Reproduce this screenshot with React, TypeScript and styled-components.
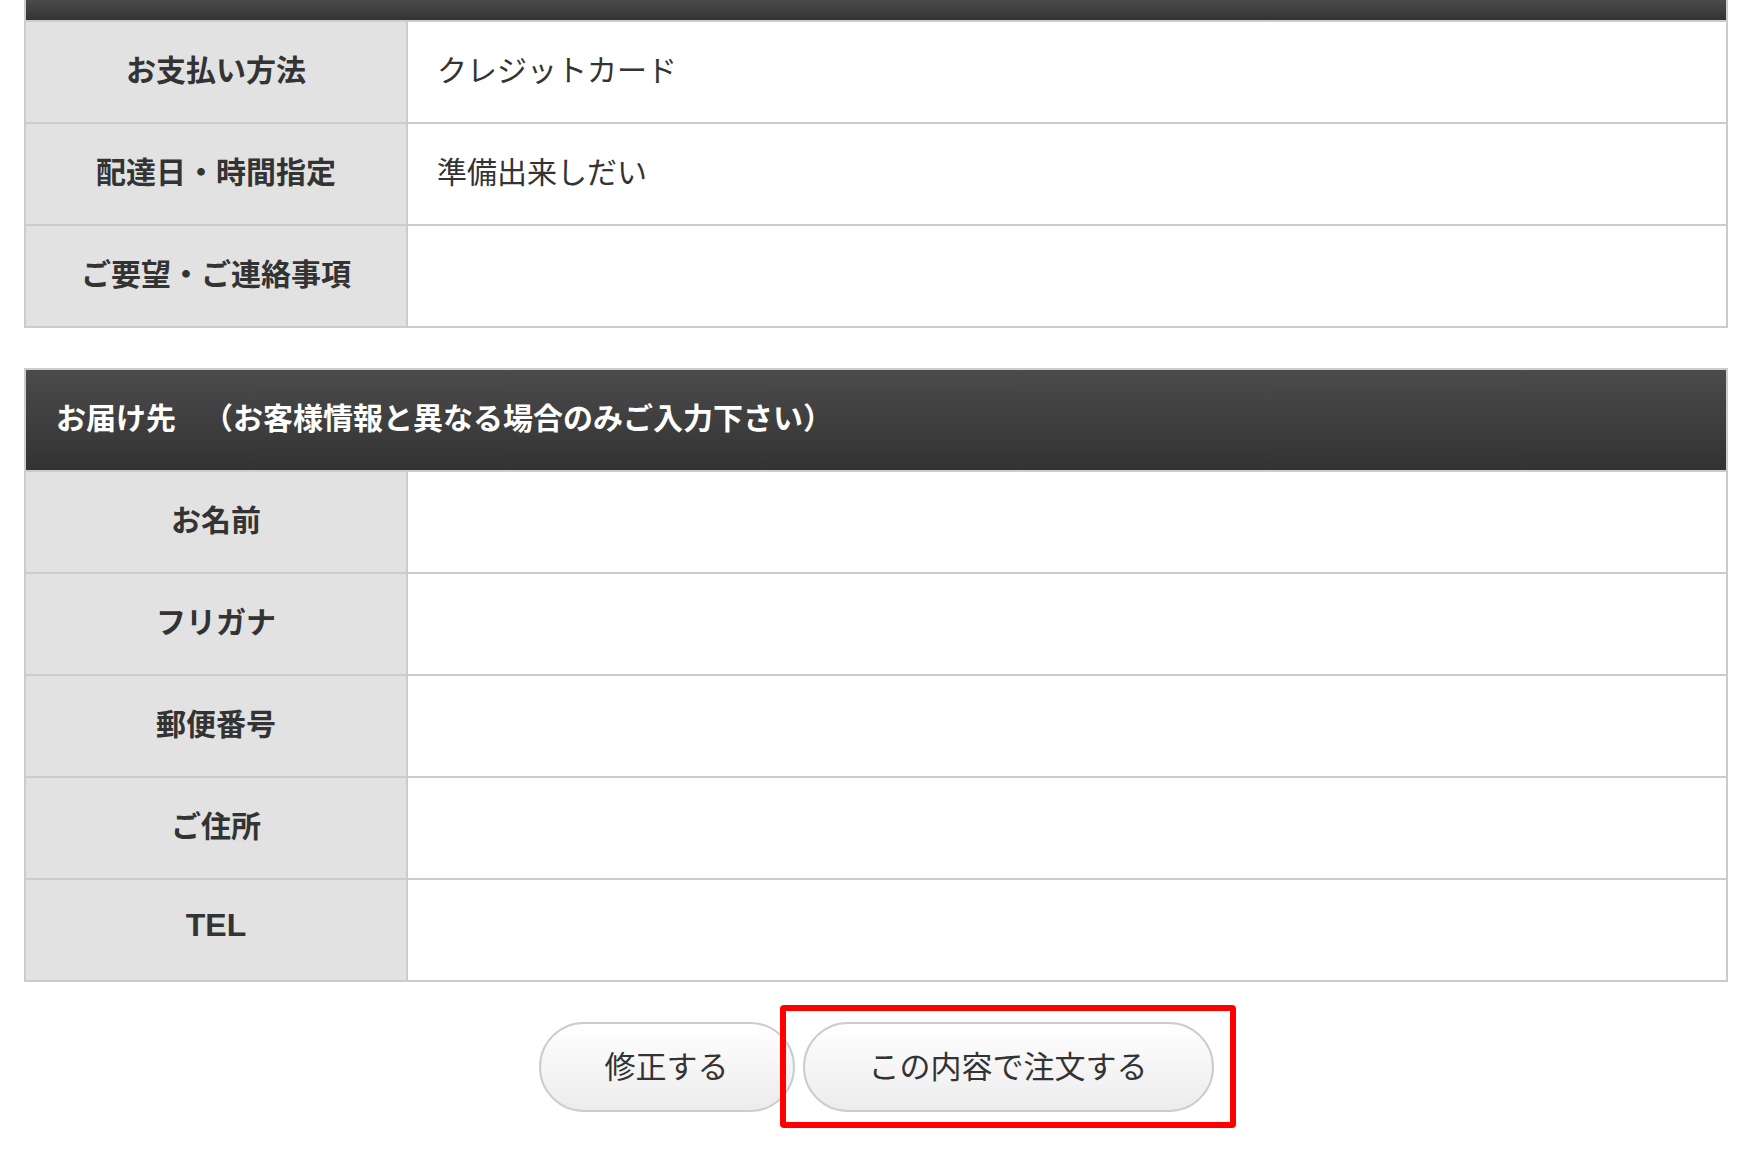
import React from "react";
import styled, { createGlobalStyle } from "styled-components";

const GlobalStyle = createGlobalStyle`
  html, body {
    margin: 0;
    padding: 0;
    background: #fff;
  }
  body {
    font-family: "Liberation Sans", "Noto Sans CJK JP", sans-serif;
    color: #333;
  }
`;

const Page = styled.div`
  width: 1704px;
  margin-left: 24px;
  padding-bottom: 40px;
`;

const Table = styled.table<{ $open?: boolean }>`
  width: 100%;
  table-layout: fixed;
  border-collapse: separate;
  border-spacing: 0;
  border-left: 2px solid #ccc;
  border-top: ${(p) => (p.$open ? "none" : "2px solid #ccc")};
  margin-bottom: 40px;
`;

const LabelCol = styled.col`
  width: 382px;
`;

const HeadCell = styled.th<{ $stub?: boolean }>`
  height: ${(p) => (p.$stub ? "20px" : "91px")};
  padding: 0 0 ${(p) => (p.$stub ? "0" : "9px")} 30px;
  background: linear-gradient(#4b4b4b, #333333);
  border-right: 2px solid #ccc;
  border-bottom: 2px solid #ccc;
  color: #fff;
  font-size: 30px;
  font-weight: 700;
  text-align: left;
  white-space: nowrap;
`;

const Note = styled.span`
  margin-left: 27px;
`;

const Label = styled.th<{ $latin?: boolean }>`
  height: 91px;
  padding: 0 0 9px;
  background: #e2e2e2;
  border-right: 2px solid #ccc;
  border-bottom: 2px solid #ccc;
  color: #333;
  font-size: ${(p) => (p.$latin ? "32px" : "30px")};
  font-weight: 700;
  text-align: center;
`;

const Value = styled.td`
  height: 91px;
  padding: 0 0 9px 29px;
  background: #fff;
  border-right: 2px solid #ccc;
  border-bottom: 2px solid #ccc;
  color: #333;
  font-size: 30px;
  font-weight: 400;
`;

const Actions = styled.div`
  display: flex;
  justify-content: center;
  align-items: center;
  gap: 8px;
`;

const Button = styled.button`
  height: 90px;
  padding: 0 64px 6px;
  border: 2px solid #ccc;
  border-radius: 45px;
  background: linear-gradient(#ffffff, #ececec);
  color: #333;
  font-family: "Liberation Sans", "Noto Sans CJK JP", sans-serif;
  font-size: 31px;
  font-weight: 400;
  cursor: pointer;
`;

const Highlight = styled.div`
  position: relative;
  display: flex;

  &::after {
    content: "";
    position: absolute;
    top: -17px;
    bottom: -16px;
    left: -23px;
    right: -22px;
    border: 6px solid #ff0000;
    border-radius: 4px;
    pointer-events: none;
  }
`;

type Row = { label: string; value?: string; latin?: boolean };

const orderRows: Row[] = [
  { label: "お支払い方法", value: "クレジットカード" },
  { label: "配達日・時間指定", value: "準備出来しだい" },
  { label: "ご要望・ご連絡事項" },
];

const shippingRows: Row[] = [
  { label: "お名前" },
  { label: "フリガナ" },
  { label: "郵便番号" },
  { label: "ご住所" },
  { label: "TEL", latin: true },
];

function Rows({ rows }: { rows: Row[] }) {
  return (
    <>
      {rows.map((r) => (
        <tr key={r.label}>
          <Label $latin={r.latin}>{r.label}</Label>
          <Value>{r.value ?? ""}</Value>
        </tr>
      ))}
    </>
  );
}

export default function App() {
  return (
    <>
      <GlobalStyle />
      <Page>
        <Table $open>
          <colgroup>
            <LabelCol />
            <col />
          </colgroup>
          <thead>
            <tr>
              <HeadCell colSpan={2} $stub />
            </tr>
          </thead>
          <tbody>
            <Rows rows={orderRows} />
          </tbody>
        </Table>

        <Table>
          <colgroup>
            <LabelCol />
            <col />
          </colgroup>
          <thead>
            <tr>
              <HeadCell colSpan={2}>
                お届け先<Note>（お客様情報と異なる場合のみご入力下さい）</Note>
              </HeadCell>
            </tr>
          </thead>
          <tbody>
            <Rows rows={shippingRows} />
          </tbody>
        </Table>

        <Actions>
          <Button type="button">修正する</Button>
          <Highlight>
            <Button type="submit">この内容で注文する</Button>
          </Highlight>
        </Actions>
      </Page>
    </>
  );
}
